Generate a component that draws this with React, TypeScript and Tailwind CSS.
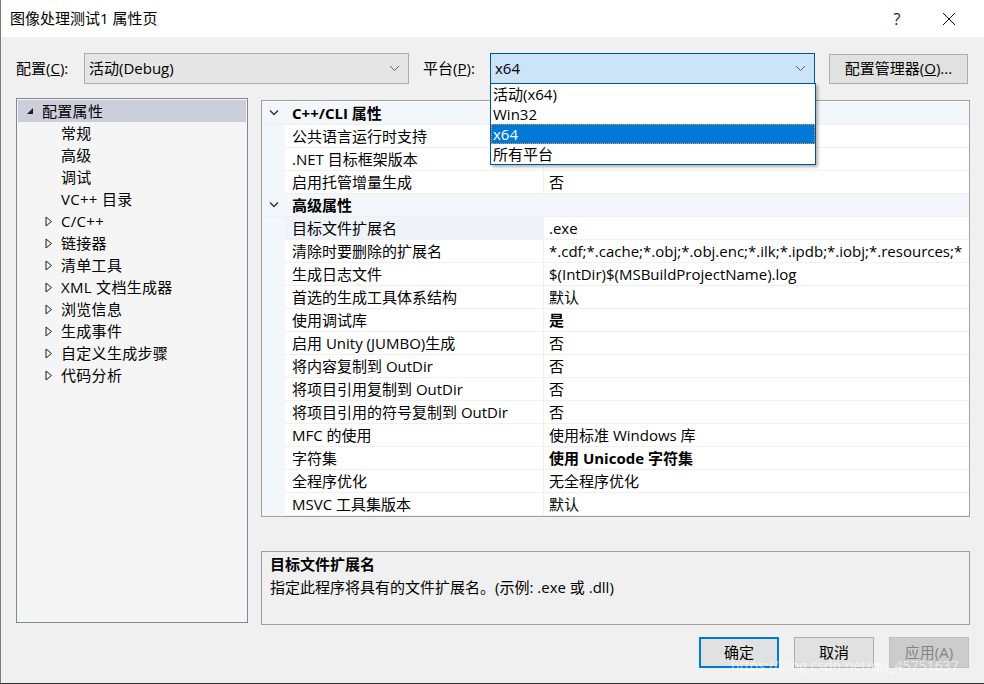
import React from "react";

const font = "font-['Open_Sans','Noto_Sans_CJK_SC',sans-serif]";

type Row = { name: string; value?: string; bold?: boolean; cat?: boolean; sel?: boolean };

const rows: Row[] = [
  { name: "C++/CLI 属性", cat: true },
  { name: "公共语言运行时支持", value: "" },
  { name: ".NET 目标框架版本", value: "" },
  { name: "启用托管增量生成", value: "否" },
  { name: "高级属性", cat: true },
  { name: "目标文件扩展名", value: ".exe", sel: true },
  { name: "清除时要删除的扩展名", value: "*.cdf;*.cache;*.obj;*.obj.enc;*.ilk;*.ipdb;*.iobj;*.resources;*" },
  { name: "生成日志文件", value: "$(IntDir)$(MSBuildProjectName).log" },
  { name: "首选的生成工具体系结构", value: "默认" },
  { name: "使用调试库", value: "是", bold: true },
  { name: "启用 Unity (JUMBO)生成", value: "否" },
  { name: "将内容复制到 OutDir", value: "否" },
  { name: "将项目引用复制到 OutDir", value: "否" },
  { name: "将项目引用的符号复制到 OutDir", value: "否" },
  { name: "MFC 的使用", value: "使用标准 Windows 库" },
  { name: "字符集", value: "使用 Unicode 字符集", bold: true },
  { name: "全程序优化", value: "无全程序优化" },
  { name: "MSVC 工具集版本", value: "默认" },
];

const tree: { label: string; level: 0 | 1 | 2; expander?: "open" | "closed"; sel?: boolean }[] = [
  { label: "配置属性", level: 0, expander: "open", sel: true },
  { label: "常规", level: 1 },
  { label: "高级", level: 1 },
  { label: "调试", level: 1 },
  { label: "VC++ 目录", level: 1 },
  { label: "C/C++", level: 2, expander: "closed" },
  { label: "链接器", level: 2, expander: "closed" },
  { label: "清单工具", level: 2, expander: "closed" },
  { label: "XML 文档生成器", level: 2, expander: "closed" },
  { label: "浏览信息", level: 2, expander: "closed" },
  { label: "生成事件", level: 2, expander: "closed" },
  { label: "自定义生成步骤", level: 2, expander: "closed" },
  { label: "代码分析", level: 2, expander: "closed" },
];

const Chevron = ({ className }: { className?: string }) => (
  <svg width="11" height="7" viewBox="0 0 11 7" className={className}>
    <polyline points="1,1 5.5,5.5 10,1" fill="none" stroke="#606060" strokeWidth="1" />
  </svg>
);

const Combo = ({ text, active }: { text: string; active?: boolean }) => (
  <div
    className={
      "w-[325px] h-[31px] flex items-center justify-between pl-[4px] pr-[8px] border " +
      (active ? "bg-[#cce4f7] border-[#005499]" : "bg-[#e5e5e5] border-[#adadad]")
    }
  >
    <span className="text-[15px] text-black">{text}</span>
    <Chevron />
  </div>
);

export default function App() {
  return (
    <div className={`w-[984px] h-[684px] bg-[#f0f0f0] relative overflow-hidden border-l border-[#7a7a7a] border-b border-b-[#333] ${font} text-[15px] text-black`}>
      {/* title bar */}
      <div className="h-[37px] bg-white flex items-center pl-[9px]">
        <span className="flex-1 text-[15px]">图像处理测试1 属性页</span>
        <span className="w-[58px] text-center text-[16px] text-[#222]">?</span>
        <div className="w-[46px] mr-[12px] flex justify-center">
          <svg width="14" height="14" viewBox="0 0 14 14">
            <path d="M1 1 L13 13 M13 1 L1 13" stroke="#111" strokeWidth="1" />
          </svg>
        </div>
      </div>

      {/* config row */}
      <div className="flex items-center h-[31px] mt-[16px] pl-[15px]">
        <span className="w-[68px]">
          配置(<span className="underline">C</span>):
        </span>
        <Combo text="活动(Debug)" />
        <span className="w-[67px] ml-[14px]">
          平台(<span className="underline">P</span>):
        </span>
        <Combo text="x64" active />
        <button className="ml-[14px] w-[139px] h-[30px] bg-[#e1e1e1] border border-[#adadad] text-[15px]">
          配置管理器(<span className="underline">O</span>)...
        </button>
      </div>

      {/* main area */}
      <div className="flex mt-[14px] pl-[15px]">
        {/* tree */}
        <div className="w-[232px] h-[525px] bg-[#f5f5f5] border border-[#828790] pt-[1px] px-[1px]">
          {tree.map((t, i) => (
            <div key={i} className={"h-[22px] flex items-center " + (t.sel ? "bg-[#cccedb]" : "")}>
              <div className={"flex items-center w-[16px] " + (t.level === 0 ? "ml-[8px]" : "ml-[27px]")}>
                {t.expander === "open" && (
                  <svg width="8" height="8" viewBox="0 0 8 8">
                    <polygon points="7,1 7,7 1,7" fill="#1e1e1e" />
                  </svg>
                )}
                {t.expander === "closed" && (
                  <svg width="8" height="11" viewBox="0 0 8 11">
                    <polygon points="1,1 6.5,5.5 1,10" fill="none" stroke="#1e1e1e" strokeWidth="1" />
                  </svg>
                )}
              </div>
              <span className="tracking-[0.3px]">{t.label}</span>
            </div>
          ))}
        </div>

        {/* right column */}
        <div className="ml-[13px] flex flex-col">
          <div className="w-[709px] h-[417px] mt-[2px] bg-white border border-[#a0a0a0] overflow-hidden pt-[1px]">
            {rows.map((r, i) =>
              r.cat ? (
                <div key={i} className="h-[23px] flex items-center bg-[#f3f6fb] border-b border-[#eef0f4]">
                  <div className="w-[23px] flex justify-center">
                    <svg width="10" height="6" viewBox="0 0 10 6">
                      <polyline points="1,0.5 5,4.5 9,0.5" fill="none" stroke="#333" strokeWidth="1.4" />
                    </svg>
                  </div>
                  <span className="ml-[7px] font-bold">{r.name}</span>
                </div>
              ) : (
                <div key={i} className="h-[23px] flex">
                  <div className="w-[23px] bg-[#f3f6fb]" />
                  <div
                    className={
                      "w-[259px] pl-[7px] flex items-center border-b border-r border-[#f0f0f0] whitespace-nowrap " +
                      (r.sel ? "bg-[#f0f3f9]" : "")
                    }
                  >
                    {r.name}
                  </div>
                  <div className={"flex-1 pl-[5px] flex items-center border-b border-[#f0f0f0] whitespace-nowrap overflow-hidden " + (r.bold ? "font-bold" : "")}>
                    {r.value}
                  </div>
                </div>
              )
            )}
          </div>
          <div className="w-[709px] h-[74px] mt-[34px] border border-[#a0a0a0] bg-[#f0f0f0] pl-[8px] pt-[1px]">
            <div className="font-bold h-[23px] flex items-center">目标文件扩展名</div>
            <div className="h-[23px] flex items-center">指定此程序将具有的文件扩展名。(示例: .exe 或 .dll)</div>
          </div>
        </div>
      </div>

      {/* buttons */}
      <div className="flex justify-end gap-[15px] pr-[15px] mt-[12px]">
        <button className="w-[80px] h-[31px] bg-[#e1e1e1] border-2 border-[#0078d7] text-[15px]">确定</button>
        <button className="w-[80px] h-[31px] bg-[#e1e1e1] border border-[#adadad] text-[15px]">取消</button>
        <button className="w-[80px] h-[31px] bg-[#cccccc] border border-[#bfbfbf] text-[15px] text-[#838383]">应用(A)</button>
      </div>

      {/* dropdown list */}
      <div className="absolute left-[489px] top-[83px] w-[326px] bg-white border border-[#005499] shadow-[2px_2px_3px_rgba(0,0,0,0.3)]">
        <div className="h-[20px] flex items-center pl-[2px]">活动(x64)</div>
        <div className="h-[20px] flex items-center pl-[2px]">Win32</div>
        <div className="h-[20px] flex items-center pl-[2px] bg-[#0078d7] text-white outline-1 outline-dotted outline-[#f0a030] -outline-offset-1">x64</div>
        <div className="h-[20px] flex items-center pl-[2px]">所有平台</div>
      </div>

      {/* watermark */}
      <div className="absolute left-[730px] top-[655px] text-[14px] text-white/60">https://blog.csdn.net/qq_45751637</div>
    </div>
  );
}
